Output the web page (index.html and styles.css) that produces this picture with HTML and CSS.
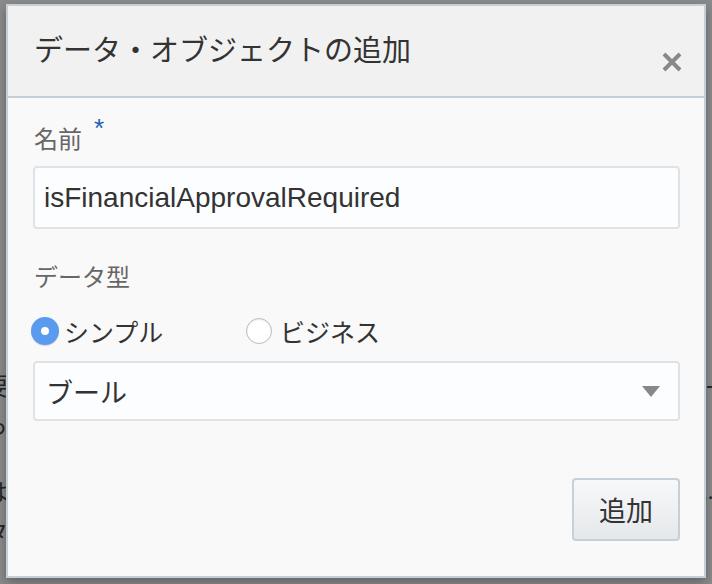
FILE: index.html
```html
<!DOCTYPE html>
<html lang="ja">
<head>
<meta charset="utf-8">
<title>データ・オブジェクトの追加</title>
<link rel="stylesheet" href="styles.css">
</head>
<body>
<div class="page">
  <div class="page-line l1"><span class="lc">要</span><span class="rc">-</span></div>
  <div class="page-line l2"><span class="lc">っ</span></div>
  <div class="page-line l3"><span class="lc">は</span><span class="rc">1.</span></div>
  <div class="page-line l4"><span class="lc">タ</span></div>
</div>
<div class="overlay">
  <div class="dialog">
    <div class="dialog-header">
      <h1 class="dialog-title">データ・オブジェクトの追加</h1>
      <button class="close" aria-label="閉じる">
        <svg width="20" height="20" viewBox="0 0 20 20"><path d="M2 2 L18 18 M18 2 L2 18" stroke="#888" stroke-width="4" stroke-linecap="butt"/></svg>
      </button>
    </div>
    <div class="dialog-body">
      <div class="label">名前<span class="req">*</span></div>
      <div class="input">isFinancialApprovalRequired</div>
      <div class="label type-label">データ型</div>
      <div class="radios">
        <label class="radio"><span class="dot on"></span>シンプル</label>
        <label class="radio"><span class="dot"></span>ビジネス</label>
      </div>
      <div class="select"><span>ブール</span><span class="arrow"></span></div>
      <div class="footer"><button class="btn">追加</button></div>
    </div>
  </div>
</div>
</body>
</html>
```
FILE: styles.css
```css
html, body {
  margin: 0;
  padding: 0;
}
body {
  width: 712px;
  height: 584px;
  background: #8b8b8b;
  overflow: hidden;
  position: relative;
  font-family: "Noto Sans CJK JP", "Liberation Sans", sans-serif;
}
.page {
  padding-top: 372px;
}
.page-line {
  display: flex;
  justify-content: space-between;
  height: 26px;
  font-size: 24px;
  line-height: 26px;
  color: #262626;
  margin-left: -16px;
  margin-right: -2px;
}
.l2 { margin-top: 14px; }
.l3 { margin-top: 40px; }
.l4 { margin-top: 14px; }
.rc { font-family: "Liberation Sans", sans-serif; }

.overlay {
  position: absolute;
  left: 6px;
  top: 4px;
}
.dialog {
  width: 696px;
  height: 570px;
  border: 2px solid #c5cfd7;
  background: #f9f9f9;
  box-shadow: 0 4px 10px rgba(0,0,0,0.3);
  display: flex;
  flex-direction: column;
}
.dialog-header {
  height: 90px;
  background: #f1f1f1;
  border-bottom: 2px solid #c5cfd7;
  display: flex;
  justify-content: space-between;
  align-items: flex-start;
  padding: 0 22px 0 26px;
}
.dialog-title {
  margin: 0;
  font-weight: normal;
  font-size: 29px;
  line-height: 40px;
  padding-top: 22px;
  color: #333;
}
.close {
  border: 0;
  background: none;
  padding: 0;
  margin-top: 46px;
  width: 20px;
  height: 20px;
}
.close svg { display: block; }
.dialog-body {
  padding: 24px 24px 0 25px;
  display: flex;
  flex-direction: column;
}
.label {
  font-size: 24px;
  line-height: 32px;
  color: #666;
  padding-left: 1px;
}
.req {
  color: #2161b3;
  font-family: "Liberation Sans", sans-serif;
  font-size: 26px;
  vertical-align: 11px;
  line-height: 0;
  margin-left: 12px;
}
.input {
  margin-top: 12px;
  height: 59px;
  border: 2px solid #e0e3e6;
  border-radius: 4px;
  background: #fcfdfe;
  font-family: "Liberation Sans", sans-serif;
  font-size: 28px;
  line-height: 59px;
  color: #333;
  padding-left: 9px;
}
.type-label {
  margin-top: 31px;
}
.radios {
  display: flex;
  margin-top: 24px;
  height: 30px;
  align-items: center;
}
.radio {
  display: flex;
  align-items: center;
  font-size: 25px;
  color: #333;
  width: 213px;
  gap: 5px;
}
.dot {
  width: 26px;
  height: 26px;
  border-radius: 50%;
  box-sizing: border-box;
  border: 1px solid #b7bcc1;
  background: #fff;
  box-shadow: inset 0 1px 2px rgba(0,0,0,0.08);
  margin-left: 0;
  margin-right: 3px;
}
.dot.on {
  width: 28px;
  height: 28px;
  border: 10px solid #5b9bef;
  background: #fff;
  box-shadow: 0 1px 1px rgba(0,0,0,0.15);
  margin-left: -2px;
  margin-right: 0;
}
.select {
  margin-top: 15px;
  height: 56px;
  border: 2px solid #e0e3e6;
  border-radius: 4px;
  background: #fcfdfe;
  display: flex;
  align-items: center;
  justify-content: space-between;
  padding: 0 18px 0 11px;
  font-size: 27px;
  color: #333;
}
.arrow {
  width: 0;
  height: 0;
  border-left: 9px solid transparent;
  border-right: 9px solid transparent;
  border-top: 11px solid #888;
}
.footer {
  display: flex;
  justify-content: flex-end;
  margin-top: 57px;
}
.btn {
  width: 108px;
  height: 63px;
  border: 2px solid #c8d0d7;
  border-radius: 4px;
  background: linear-gradient(#f7f8f9, #e5e8eb);
  font-family: "Noto Sans CJK JP", sans-serif;
  font-size: 27px;
  color: #333;
  padding: 0;
}
```
